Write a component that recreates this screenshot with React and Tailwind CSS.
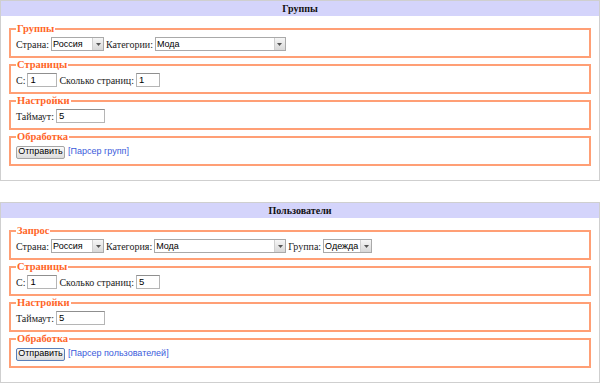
import React from 'react';

function Select({ value, w }) {
  return (
    <div className={`flex h-[14px] items-stretch border border-[#a9a9a9] bg-white ${w}`}>
      <span className="flex-1 whitespace-nowrap pl-[1px] font-['Liberation_Sans',Arial,sans-serif] text-[9px] leading-[12px] text-black">{value}</span>
      <span className="flex w-[11px] shrink-0 items-center justify-center border-l border-[#cfcfcf] bg-gradient-to-b from-[#f6f6f6] to-[#d8d8d8]">
        <svg width="5" height="3" viewBox="0 0 5 3"><path d="M0 0h5L2.5 3z" fill="#555" /></svg>
      </span>
    </div>
  );
}

function Input({ value, w }) {
  return (
    <div className={`h-[14px] border border-[#b5b5b5] border-t-[#8f8f8f] bg-white pl-[2px] font-['Liberation_Sans',Arial,sans-serif] text-[9.5px] leading-[12px] text-black ${w}`}>
      {value}
    </div>
  );
}

function Box({ title, children }) {
  return (
    <fieldset className="mx-[8px] border-2 border-[#ff9f75] px-[5px] pb-[4px]">
      <legend className="px-[1px] font-['Liberation_Serif','Times_New_Roman',serif] text-[10.5px] font-bold leading-[14px] text-[#ff6629]">{title}</legend>
      <div className="flex h-[16px] items-center gap-[2px] font-['Liberation_Serif','Times_New_Roman',serif] text-[10px] text-[#222]">{children}</div>
    </fieldset>
  );
}

function Submit({ focused }) {
  return (
    <div className={`flex h-[13px] w-[49px] items-center justify-center rounded-[2px] border bg-gradient-to-b from-[#fbfbfb] to-[#dcdcdc] font-['Liberation_Sans',Arial,sans-serif] text-[9px] text-black ${focused ? 'border-[#5a7fb8]' : 'border-[#a5a5a5]'}`}>
      Отправить
    </div>
  );
}

function Parser({ children }) {
  return <span className="ml-[1px] font-['Liberation_Sans',Arial,sans-serif] text-[9px] text-[#3b5bdb]">{children}</span>;
}

function Panel({ title, children }) {
  return (
    <div className="h-[181px] border border-[#cfcfcf] bg-white">
      <div className="flex h-[15px] items-center justify-center bg-[#d4d4fb] font-['Liberation_Serif','Times_New_Roman',serif] text-[10px] font-bold text-[#111]">{title}</div>
      <div className="flex flex-col pt-[6px]">{children}</div>
    </div>
  );
}

export default function App() {
  return (
    <div className="flex h-[384px] w-[600px] flex-col gap-[21px] overflow-hidden bg-white">
      <Panel title="Группы">
        <Box title="Группы">
          <span>Страна:</span>
          <Select value="Россия" w="w-[53px]" />
          <span>Категории:</span>
          <Select value="Мода" w="w-[131px]" />
        </Box>
        <Box title="Страницы">
          <span>С:</span>
          <Input value="1" w="w-[30px]" />
          <span>Сколько страниц:</span>
          <Input value="1" w="w-[24px]" />
        </Box>
        <Box title="Настройки">
          <span>Таймаут:</span>
          <Input value="5" w="w-[49px]" />
        </Box>
        <Box title="Обработка">
          <Submit />
          <Parser>[Парсер групп]</Parser>
        </Box>
      </Panel>
      <Panel title="Пользователи">
        <Box title="Запрос">
          <span>Страна:</span>
          <Select value="Россия" w="w-[53px]" />
          <span>Категория:</span>
          <Select value="Мода" w="w-[132px]" />
          <span>Группа:</span>
          <Select value="Одежда" w="w-[49px]" />
        </Box>
        <Box title="Страницы">
          <span>С:</span>
          <Input value="1" w="w-[30px]" />
          <span>Сколько страниц:</span>
          <Input value="5" w="w-[24px]" />
        </Box>
        <Box title="Настройки">
          <span>Таймаут:</span>
          <Input value="5" w="w-[49px]" />
        </Box>
        <Box title="Обработка">
          <Submit focused />
          <Parser>[Парсер пользователей]</Parser>
        </Box>
      </Panel>
    </div>
  );
}
